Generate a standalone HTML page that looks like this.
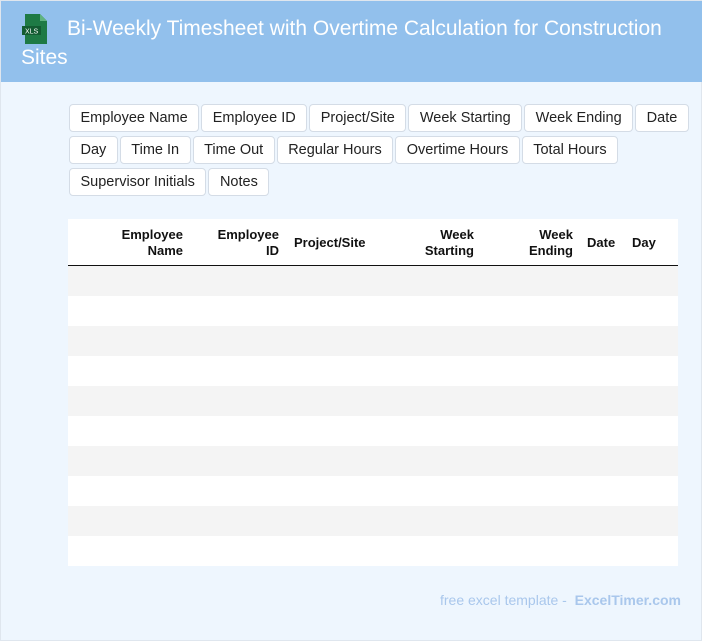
<!DOCTYPE html>
<html><head><meta charset="utf-8"><style>
*{margin:0;padding:0;box-sizing:border-box}
body{width:702px;height:641px;background:#eef6fe;font-family:"Liberation Sans",sans-serif;position:relative;overflow:hidden;border:1px solid #dfe6ee}
.hd{position:absolute;left:0;top:0;width:702px;height:81px;background:#92c0ec}
.title{position:absolute;left:20px;top:13px;width:650px;color:#fff;font-size:21px;line-height:29px;text-indent:46px}
.tags{position:absolute;left:68px;top:103px;width:632px;font-size:0}
.tag{display:inline-block;height:28px;line-height:26px;padding:0 10.5px;margin:0 2px 4px 0;background:#fff;border:1px solid #d4dce6;border-radius:4px;font-size:14.5px;color:#222;vertical-align:top}
.tbl{position:absolute;left:67px;top:218px;width:610px;height:347px;background:#fff}
.th{position:absolute;font-weight:bold;font-size:13px;line-height:16px;color:#111}
.line{position:absolute;left:0;top:46px;width:610px;height:1px;background:#111}
.row{position:absolute;left:0;width:610px;height:30px;background:#f4f4f4}
.ft{position:absolute;right:20px;top:591px;font-size:14px;color:#a9c7ec}
</style></head><body>
<div class="hd"></div>
<svg style="position:absolute;left:21px;top:13px" width="28" height="30" viewBox="0 0 28 30"><path d="M3 0h15l7 7v23H3z" fill="#1e7a45"/><path d="M18 0v7h7z" fill="#5fb37f"/><rect x="0" y="12" width="19" height="9" fill="#135c32"/><text x="3" y="19.5" font-size="7" fill="#fff" font-family="Liberation Sans">XLS</text></svg>
<div class="title">Bi-Weekly Timesheet with Overtime Calculation for Construction Sites</div>
<div class="tags"><span class="tag">Employee Name</span><span class="tag">Employee ID</span><span class="tag">Project/Site</span><span class="tag">Week Starting</span><span class="tag">Week Ending</span><span class="tag">Date</span><br><span class="tag">Day</span><span class="tag">Time In</span><span class="tag">Time Out</span><span class="tag">Regular Hours</span><span class="tag">Overtime Hours</span><span class="tag">Total Hours</span><br><span class="tag">Supervisor Initials</span><span class="tag">Notes</span></div>
<div class="tbl">
<div class="th" style="right:495px;top:8px;text-align:right">Employee<br>Name</div>
<div class="th" style="right:399px;top:8px;text-align:right">Employee<br>ID</div>
<div class="th" style="left:226px;top:16px">Project/Site</div>
<div class="th" style="right:204px;top:8px;text-align:right">Week<br>Starting</div>
<div class="th" style="right:105px;top:8px;text-align:right">Week<br>Ending</div>
<div class="th" style="left:519px;top:16px">Date</div>
<div class="th" style="left:564px;top:16px">Day</div>
<div class="line"></div>
<div class="row" style="top:47px"></div>
<div class="row" style="top:107px"></div>
<div class="row" style="top:167px"></div>
<div class="row" style="top:227px"></div>
<div class="row" style="top:287px"></div>
</div>
<div class="ft">free excel template - &nbsp;<b>ExcelTimer.com</b></div>
</body></html>
